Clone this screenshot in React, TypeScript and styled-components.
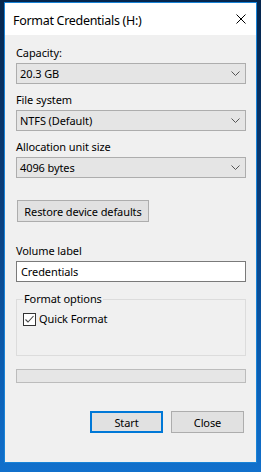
import styled, { createGlobalStyle } from "styled-components"

const GlobalStyle = createGlobalStyle`
  html, body {
    margin: 0;
    padding: 0;
  }
  body {
    font-family: "Segoe UI", "Noto Sans", sans-serif;
    font-size: 11px;
    letter-spacing: -0.1px;
    color: #000;
  }
`

const Desktop = styled.div`
  width: 261px;
  height: 472px;
  box-sizing: border-box;
  padding: 2px 4px 0 4px;
  overflow: hidden;
  background: linear-gradient(180deg, #06264d 0%, #0a3f7d 45%, #0b5fb4 80%, #1170cc 100%);
`

const Window = styled.div`
  width: 253px;
  height: 461px;
  box-sizing: border-box;
  border: 1px solid #1883d7;
  background: #f0f0f0;
  display: flex;
  flex-direction: column;
`

const TitleBar = styled.div`
  height: 32px;
  flex-shrink: 0;
  background: #fff;
  display: flex;
  align-items: center;
  justify-content: space-between;
  padding: 0 10px 0 8px;
`

const Title = styled.span`
  font-size: 12.5px;
  letter-spacing: -0.3px;
  padding-top: 3px;
`

const Body = styled.div`
  display: flex;
  flex-direction: column;
  padding: 10px 10px 0 11px;
`

const Label = styled.div<{ $top?: number }>`
  line-height: 16px;
  height: 16px;
  margin-top: ${(p) => p.$top ?? 0}px;
  margin-bottom: 2px;
  white-space: nowrap;
`

const Combo = styled.div`
  height: 21px;
  box-sizing: border-box;
  border: 1px solid #adadad;
  background: #e5e5e5;
  display: flex;
  align-items: center;
  justify-content: space-between;
  padding: 0 5px 0 3px;
`

const Button = styled.button<{ $primary?: boolean }>`
  font: inherit;
  letter-spacing: inherit;
  color: #000;
  height: 22px;
  width: 73px;
  box-sizing: border-box;
  padding: 0;
  white-space: nowrap;
  background: #e1e1e1;
  border: ${(p) => (p.$primary ? "2px solid #0078d7" : "1px solid #adadad")};
`

const RestoreButton = styled(Button)`
  width: 132px;
  align-self: flex-start;
  margin: 22px 0 0 1px;
`

const TextInput = styled.div`
  height: 21px;
  box-sizing: border-box;
  border: 1px solid #7a7a7a;
  background: #fff;
  display: flex;
  align-items: center;
  padding-left: 4px;
`

const Group = styled.fieldset`
  margin: 9px 0 0 0;
  min-width: 0;
  height: 65px;
  box-sizing: border-box;
  border: 1px solid #dcdcdc;
  padding: 4px 6px 0 6px;
`

const Legend = styled.legend`
  padding: 0 1px;
  line-height: 16px;
`

const CheckRow = styled.label`
  display: flex;
  align-items: center;
  gap: 3px;
  line-height: 16px;
`

const Box = styled.span`
  width: 13px;
  height: 13px;
  box-sizing: border-box;
  border: 1px solid #333;
  background: #fff;
  display: flex;
`

const Progress = styled.div`
  margin-top: 13px;
  height: 14px;
  box-sizing: border-box;
  border: 1px solid #bcbcbc;
  background: #e6e6e6;
`

const Actions = styled.div`
  margin-top: 28px;
  display: flex;
  justify-content: flex-end;
  gap: 8px;
  padding-right: 2px;
`

const Chevron = () => (
  <svg width="9" height="5" viewBox="0 0 9 5">
    <polyline points="0.5,0.5 4.5,4.5 8.5,0.5" fill="none" stroke="#555" strokeWidth="1" />
  </svg>
)

const CloseIcon = () => (
  <svg width="10" height="10" viewBox="0 0 10 10">
    <path d="M0.5 0.5 L9.5 9.5 M9.5 0.5 L0.5 9.5" stroke="#000" strokeWidth="1" />
  </svg>
)

export default function App() {
  const combos = [
    { label: "Capacity:", value: "20.3 GB", top: 0 },
    { label: "File system", value: "NTFS (Default)", top: 8 },
    { label: "Allocation unit size", value: "4096 bytes", top: 8 },
  ]

  return (
    <Desktop>
      <GlobalStyle />
      <Window>
        <TitleBar>
          <Title>Format Credentials (H:)</Title>
          <CloseIcon />
        </TitleBar>
        <Body>
          {combos.map((c) => (
            <div key={c.label}>
              <Label $top={c.top}>{c.label}</Label>
              <Combo>
                <span>{c.value}</span>
                <Chevron />
              </Combo>
            </div>
          ))}
          <RestoreButton>Restore device defaults</RestoreButton>
          <Label $top={21}>Volume label</Label>
          <TextInput>Credentials</TextInput>
          <Group>
            <Legend>Format options</Legend>
            <CheckRow>
              <Box>
                <svg width="11" height="11" viewBox="0 0 11 11">
                  <polyline points="1.5,5.5 4,8 9.5,2" fill="none" stroke="#444" strokeWidth="1.1" />
                </svg>
              </Box>
              Quick Format
            </CheckRow>
          </Group>
          <Progress />
          <Actions>
            <Button $primary>Start</Button>
            <Button>Close</Button>
          </Actions>
        </Body>
      </Window>
    </Desktop>
  )
}
